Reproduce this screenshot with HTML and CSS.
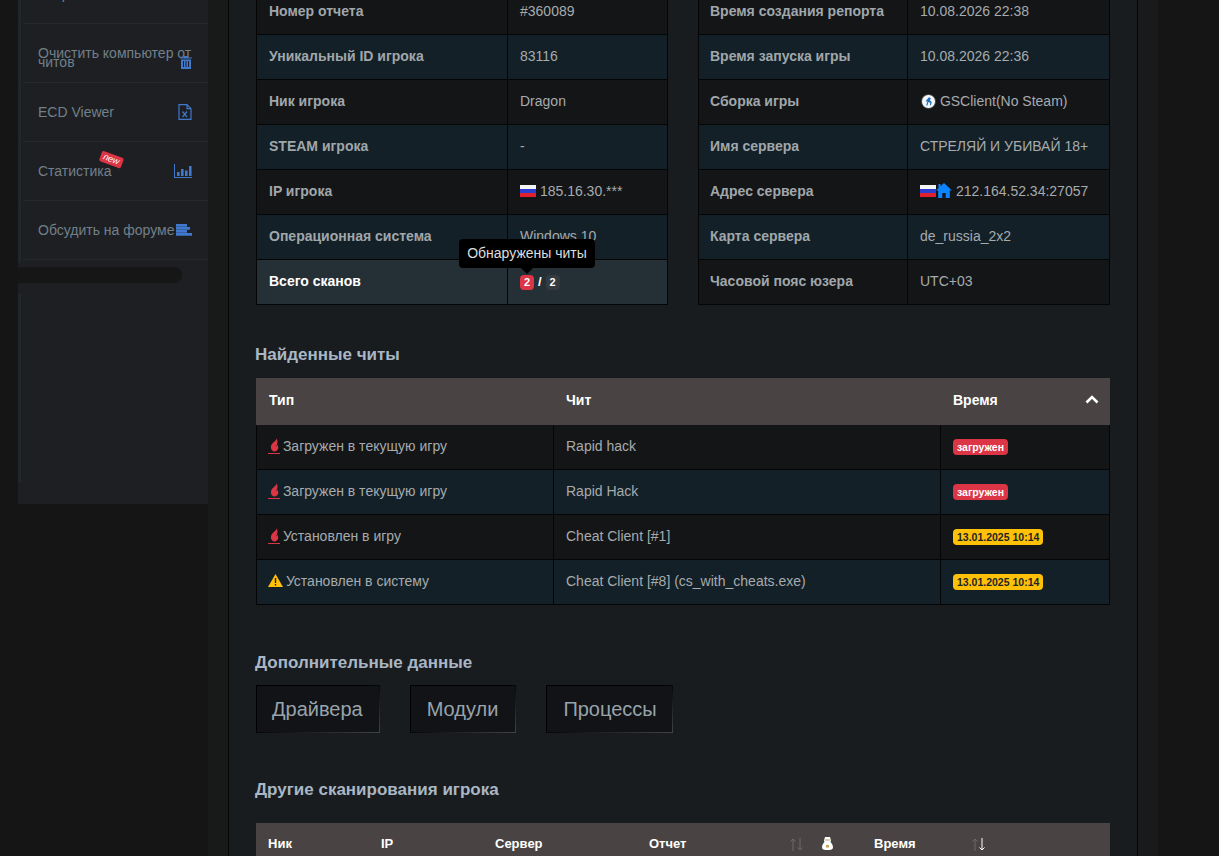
FILE: index.html
```html
<!DOCTYPE html>
<html lang="ru">
<head>
    <meta charset="UTF-8">
    <title>Отчет #360089</title>
    <link rel="stylesheet" href="styles.css">
</head>
<body>
    <svg class="defs" width="0" height="0">
        <symbol id="flame" viewBox="0 0 12 14"><path d="M8.500 0C9 2.500 5.800 3.500 3.800 6.300 2 9 3 12.600 5.800 13.400 8.600 14 10.400 11.600 10.300 9.300 10.200 8 9.700 7 9 6.400 9.200 7.400 8.700 8.200 8 8.600 9.400 5.600 10.400 3 8.500 0z"/></symbol>
        <symbol id="flag" viewBox="0 0 16 12"><rect width="16" height="4" fill="#f4f4f4"/><rect y="4" width="16" height="4" fill="#2a3fd0"/><rect y="8" width="16" height="4" fill="#e0202c"/></symbol>
        <symbol id="sort-up" viewBox="0 0 6 13"><path d="M3 13V1M.5 3.500L3 1l2.500 2.500" fill="none" stroke="currentColor"/></symbol>
        <symbol id="sort-down" viewBox="0 0 6 13"><path d="M3 0v12M.5 9.500L3 12l2.500-2.500" fill="none" stroke="currentColor"/></symbol>
    </svg>

    <div class="page">
        <aside class="aside">
            <nav class="sidebar">
                <div class="menu">
                    <a class="menu-item"><span>Запросы</span></a>
                    <a class="menu-item menu-item-wrap">
                        <span class="menu-label">Очистить компьютер от читов</span>
                        <svg class="icon icon-trash" viewBox="0 0 12 13"><path d="M0 1.500h4V0h4v1.500h4v1H0zM1 3.500h10V13H1zM3 5v6h1V5zM5.500 5v6h1V5zM8 5v6h1V5z" fill-rule="evenodd"/></svg>
                    </a>
                    <a class="menu-item">
                        <span>ECD Viewer</span>
                        <svg class="icon icon-file" viewBox="0 0 14 16"><path d="M1 .7h8l4 4v10.600H1zM9 .7v4h4" fill="none" stroke="#3f78cc" stroke-width="1.200"/><path d="M4.500 7.500l4.500 5.500M9 7.500l-4.500 5.500" fill="none" stroke="#3f78cc" stroke-width="1.200"/></svg>
                    </a>
                    <a class="menu-item">
                        <span class="menu-label-new">Статистика<b class="new-badge">new</b></span>
                        <svg class="icon icon-chart" viewBox="0 0 18 14"><path d="M0 0h1v13h17v1H0zM3 8h2.600v4H3zM7 5h2.600v7H7zM11 6.500h2.600V12H11zM15 2h2.600v10H15z"/></svg>
                    </a>
                    <a class="menu-item">
                        <span class="menu-nowrap">Обсудить на форуме</span>
                        <svg class="icon icon-lines" viewBox="0 0 16 12"><path d="M0 0h11v2.700H0zM0 3h14v2.700H0zM0 6h11v2.700H0zM0 9h16v2.700H0z"/></svg>
                    </a>
                </div>
                <div class="side-scroll"></div>
                <div class="menu-rest"></div>
            </nav>
        </aside>

        <main class="main">
            <div class="info-tables">
                <table class="data-table info-table">
                    <colgroup><col class="col-l1"><col></colgroup>
                    <tr><th>Номер отчета</th><td>#360089</td></tr>
                    <tr><th>Уникальный ID игрока</th><td>83116</td></tr>
                    <tr><th>Ник игрока</th><td>Dragon</td></tr>
                    <tr><th>STEAM игрока</th><td>-</td></tr>
                    <tr><th>IP игрока</th><td><svg class="flag"><use href="#flag"/></svg> 185.16.30.***</td></tr>
                    <tr><th>Операционная система</th><td>Windows 10</td></tr>
                    <tr class="row-total">
                        <th>Всего сканов</th>
                        <td>
                            <span class="scan-badges">
                                <span class="count count-red">2
                                    <span class="tooltip">Обнаружены читы</span>
                                </span>
                                <span class="count-sep">/</span>
                                <span class="count count-dark">2</span>
                            </span>
                        </td>
                    </tr>
                </table>

                <table class="data-table info-table info-table-right">
                    <colgroup><col class="col-r1"><col></colgroup>
                    <tr><th>Время создания репорта</th><td>10.08.2026 22:38</td></tr>
                    <tr><th>Время запуска игры</th><td>10.08.2026 22:36</td></tr>
                    <tr><th>Сборка игры</th><td><svg class="cs-icon" viewBox="0 0 16 16"><circle cx="8" cy="8" r="7.500" fill="#f4f6f8" stroke="#333"/><path d="M8.500 3.500l2 1-1 2.500 2 1.500-1 3.500H9.500l.3-2.800L8 8.500l-1.200 3.700H5.500L7 7.500 5.700 8.300 5 7.500z" fill="#1c6fc0"/></svg> GSClient(No Steam)</td></tr>
                    <tr><th>Имя сервера</th><td>СТРЕЛЯЙ И УБИВАЙ 18+</td></tr>
                    <tr><th>Адрес сервера</th><td><svg class="flag"><use href="#flag"/></svg><svg class="home-icon" viewBox="0 0 16 15"><path d="M8 0l8 7.500h-2.200V15H9.700v-5H6.300v5H2.200V7.500H0L2.500 5V1h2v2.200z"/></svg> 212.164.52.34:27057</td></tr>
                    <tr><th>Карта сервера</th><td>de_russia_2x2</td></tr>
                    <tr><th>Часовой пояс юзера</th><td>UTC+03</td></tr>
                </table>
            </div>

            <h2 class="section-title title-cheats">Найденные читы</h2>
            <table class="data-table cheats-table">
                <colgroup><col class="col-type"><col class="col-cheat"><col></colgroup>
                <thead>
                    <tr>
                        <th>Тип</th>
                        <th>Чит</th>
                        <th>Время<svg class="chevron" viewBox="0 0 14 9"><path d="M1.500 7.500L7 2l5.500 5.500" fill="none" stroke="#fff" stroke-width="2.600"/></svg></th>
                    </tr>
                </thead>
                <tbody>
                    <tr>
                        <td><span class="flame-link"><svg class="flame"><use href="#flame"/></svg></span> Загружен в текущую игру</td>
                        <td>Rapid hack</td>
                        <td><span class="tag tag-red">загружен</span></td>
                    </tr>
                    <tr>
                        <td><span class="flame-link"><svg class="flame"><use href="#flame"/></svg></span> Загружен в текущую игру</td>
                        <td>Rapid Hack</td>
                        <td><span class="tag tag-red">загружен</span></td>
                    </tr>
                    <tr>
                        <td><span class="flame-link"><svg class="flame"><use href="#flame"/></svg></span> Установлен в игру</td>
                        <td>Cheat Client [#1]</td>
                        <td><span class="tag tag-yellow">13.01.2025 10:14</span></td>
                    </tr>
                    <tr>
                        <td><svg class="warn-icon" viewBox="0 0 15 13"><path d="M7.500 0L15 13H0z" fill="#ffc107"/><path d="M6.800 4h1.400v5H6.800zM6.800 10h1.400v1.500H6.800z" fill="#222"/></svg> Установлен в систему</td>
                        <td>Cheat Client [#8] (cs_with_cheats.exe)</td>
                        <td><span class="tag tag-yellow">13.01.2025 10:14</span></td>
                    </tr>
                </tbody>
            </table>

            <h2 class="section-title title-extra">Дополнительные данные</h2>
            <div class="extra-buttons">
                <button class="dark-btn">Драйвера</button>
                <button class="dark-btn btn-modules">Модули</button>
                <button class="dark-btn btn-processes">Процессы</button>
            </div>

            <h2 class="section-title title-other">Другие сканирования игрока</h2>
            <table class="data-table other-table">
                <colgroup><col class="col-nick"><col class="col-ip"><col class="col-server"><col class="col-report"><col class="col-snow"><col class="col-time"><col></colgroup>
                <thead>
                    <tr>
                        <th>Ник</th>
                        <th>IP</th>
                        <th>Сервер</th>
                        <th>Отчет<span class="sort"><svg><use href="#sort-up"/></svg><svg><use href="#sort-down"/></svg></span></th>
                        <th><svg class="snow-icon" viewBox="0 0 11 13"><path d="M3 0h5l1 3.500-.5 1.500c1.500 1.500 2.500 3.500 2.500 5.500 0 2-2 2.500-5.500 2.500S0 12.500 0 10.500C0 8.500 1 6.500 2.500 5L2 3.500z" fill="#fff"/><path d="M3 2.500h5v1H3zM4 8h3v2.500H4z" fill="#c9a15a"/></svg></th>
                        <th>Время<span class="sort sort-active"><svg><use href="#sort-up"/></svg><svg><use href="#sort-down"/></svg></span></th>
                        <th></th>
                    </tr>
                </thead>
            </table>
        </main>

        <div class="gutter"></div>
    </div>
</body>
</html>
```

FILE: styles.css
```css
html, body {
    height: 100%;
}
body {
    margin: 0;
    overflow: hidden;
    background-color: #151515;
    font-family: "Liberation Sans", Arial, sans-serif;
    font-size: 14px;
    color: #a6abae;
}
.defs {
    position: absolute;
}
.page {
    display: flex;
    margin-top: -60px;
}

/* sidebar */
.aside {
    flex: none;
    width: 228px;
    padding: 25px 20px 0 18px;
    box-sizing: border-box;
    background: linear-gradient(to right, #151515 208px, #181a1a 208px);
}
.sidebar {
    height: 539px;
    background-color: #1d1f23;
}
.menu {
    height: 297px;
    box-sizing: border-box;
    padding-left: 2px;
    border-left: 3px solid #21262a;
}
.menu-item {
    display: flex;
    align-items: center;
    justify-content: space-between;
    height: 59px;
    box-sizing: border-box;
    padding: 0 16px 0 15px;
    border-bottom: 1px solid #26292d;
    color: #738089;
}
.menu-item-wrap {
    padding-top: 9px;
}
.menu-label {
    flex: 1;
    line-height: 9px;
}
.menu-nowrap {
    white-space: nowrap;
}
.menu-label-new {
    position: relative;
}
.new-badge {
    position: absolute;
    left: 62px;
    top: -9px;
    padding: 0 3px;
    border-radius: 2px;
    background-color: #dc3545;
    color: #fff;
    font-size: 9px;
    font-style: italic;
    font-weight: normal;
    line-height: 11px;
    transform: rotate(20deg);
}
.icon {
    flex: none;
    fill: #3f78cc;
}
.icon-trash {
    width: 12px;
    height: 13px;
    margin: 10px 0 0 -12px;
}
.icon-file {
    width: 14px;
    height: 16px;
}
.icon-chart {
    width: 18px;
    height: 14px;
}
.icon-lines {
    width: 16px;
    height: 12px;
    margin-left: 2px;
}
.side-scroll {
    width: 164px;
    height: 16px;
    margin-top: 5px;
    border-radius: 0 8px 8px 0;
    background-color: #161616;
}
.menu-rest {
    height: 190px;
    margin-top: 10px;
    border-left: 3px solid #21262a;
}

/* main column */
.main {
    flex: none;
    width: 910px;
    height: 916px;
    box-sizing: border-box;
    padding: 49px 27px 0;
    border-left: 1px solid #050505;
    border-right: 1px solid #050505;
    background-color: #191c1e;
}
.gutter {
    flex: none;
    width: 20px;
    height: 916px;
    background-color: #181a1b;
}
.info-tables {
    display: flex;
    justify-content: space-between;
}
.data-table {
    table-layout: fixed;
    border-collapse: collapse;
}
.data-table td,
.info-table th {
    height: 45px;
    box-sizing: border-box;
    padding: 0 12px 2px;
    border: 1px solid #050505;
    text-align: left;
}
.info-table {
    width: 412px;
}
.info-table th {
    font-weight: bold;
    color: #a0a7ab;
}
.info-table-right th {
    padding-left: 11px;
}
.col-l1 {
    width: 251px;
}
.col-r1 {
    width: 209px;
}
.data-table tr {
    background-color: #141517;
}
.data-table tr:nth-child(even) {
    background-color: #132027;
}
.info-table .row-total {
    background-color: #252f36;
}
.info-table .row-total th {
    color: #fff;
}
.flag {
    width: 16px;
    height: 12px;
    vertical-align: -1px;
}
.home-icon {
    width: 16px;
    height: 15px;
    vertical-align: -2px;
    fill: #0a84ff;
}
.cs-icon {
    width: 15px;
    height: 15px;
    margin-left: 1px;
    vertical-align: -3px;
}
.scan-badges {
    display: inline-flex;
    align-items: center;
    gap: 4px;
    vertical-align: -1px;
}
.count {
    position: relative;
    display: inline-block;
    width: 14px;
    height: 15px;
    border-radius: 4px;
    color: #fff;
    font-size: 11px;
    font-weight: bold;
    line-height: 15px;
    text-align: center;
}
.count-red {
    background-color: #dc3545;
}
.count-dark {
    background-color: #343a40;
}
.count-sep {
    margin: 0 0 2px;
    color: #fff;
    font-size: 13px;
    font-weight: bold;
}
.tooltip {
    position: absolute;
    left: -61px;
    top: -36px;
    width: 136px;
    height: 29px;
    border-radius: 4px;
    background-color: #000;
    color: #dedede;
    font-size: 14px;
    font-weight: normal;
    line-height: 29px;
}
.tooltip::after {
    content: "";
    position: absolute;
    left: 62px;
    top: 29px;
    border: 6px solid transparent;
    border-top-color: #000;
    border-bottom: 0;
}

/* sections */
.section-title {
    margin: 0;
    font-size: 17px;
    line-height: 19px;
    font-weight: bold;
    color: #a9b7c5;
    margin-left: -1px;
}
.title-cheats {
    margin-top: 40px;
    margin-bottom: 14px;
}
.title-extra {
    margin-top: 48px;
    margin-bottom: 13px;
}
.title-other {
    margin-top: 47px;
    margin-bottom: 24px;
}
.data-table thead tr,
.data-table thead tr:nth-child(even) {
    background-color: #494443;
}
.data-table thead th {
    position: relative;
    height: 46px;
    box-sizing: border-box;
    padding: 0 12px 4px;
    border: 1px solid #494443;
    color: #fff;
    font-weight: bold;
    text-align: left;
}
.cheats-table {
    width: 854px;
}
.cheats-table tbody tr:nth-child(odd) {
    background-color: #141517;
}
.col-type {
    width: 297px;
}
.col-cheat {
    width: 387px;
}
.flame-link {
    display: inline-block;
    height: 15px;
    margin: 0 -1px 0 -1px;
    border-bottom: 1px solid #dc3545;
    vertical-align: -3px;
}
.flame {
    display: block;
    width: 12px;
    height: 14px;
    fill: #dc3545;
}
.warn-icon {
    width: 15px;
    height: 13px;
    margin: 0 -1px 0 -1px;
    vertical-align: -1px;
}
.chevron {
    position: absolute;
    right: 10px;
    top: 16px;
    width: 14px;
    height: 9px;
}
.tag {
    display: inline-block;
    height: 16px;
    padding: 0 4px;
    border-radius: 4px;
    font-size: 10.500px;
    font-weight: bold;
    line-height: 16px;
    vertical-align: middle;
}
.tag-red {
    background-color: #dc3545;
    color: #fff;
}
.tag-yellow {
    background-color: #ffc107;
    color: #212529;
}
.extra-buttons {
    display: flex;
    gap: 30px;
}
.dark-btn {
    height: 48px;
    padding: 0 16px 0 15px;
    border: 1px solid;
    border-image: linear-gradient(to bottom right, #000 45%, #444) 1;
    background-color: #111316;
    color: #98a3ab;
    font-family: inherit;
    font-size: 20px;
}
.btn-modules {
    padding: 0 17px 0 16px;
}
.btn-processes {
    padding: 0 15px 0 16px;
}
.other-table {
    width: 854px;
}
.other-table thead th {
    padding: 0 12px 6px 11px;
    font-size: 13px;
}
.col-nick {
    width: 113px;
}
.col-ip {
    width: 114px;
}
.col-server {
    width: 154px;
}
.col-report {
    width: 173px;
}
.col-snow {
    width: 52px;
}
.col-time {
    width: 130px;
}
.sort {
    position: absolute;
    right: 7px;
    top: 14px;
    display: flex;
    gap: 1px;
    color: #6d6866;
}
.sort svg {
    width: 6px;
    height: 13px;
}
.sort-active svg:last-child {
    color: #fff;
}
.snow-icon {
    width: 11px;
    height: 13px;
    vertical-align: -2px;
}
```
